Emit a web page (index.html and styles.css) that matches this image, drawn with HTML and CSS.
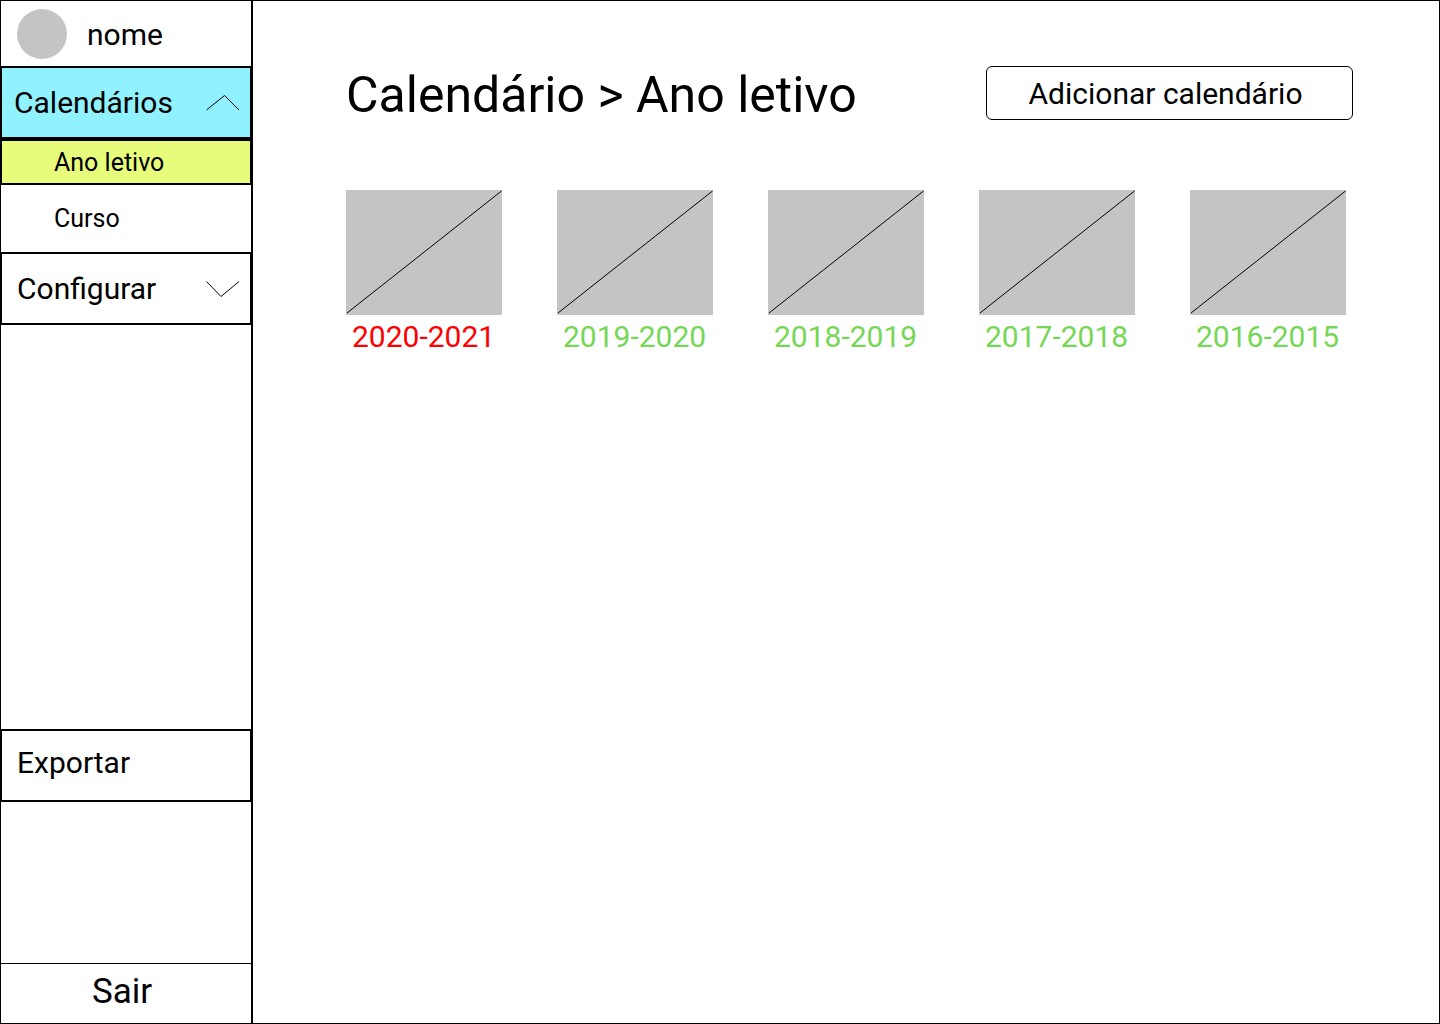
FILE: index.html
```html
<!DOCTYPE html>
<html lang="pt">
<head>
  <meta charset="utf-8">
  <meta name="viewport" content="width=device-width, initial-scale=1">
  <title>Calendário &gt; Ano letivo</title>
  <link rel="stylesheet" href="styles.css">
</head>
<body>
  <div class="shell">
    <aside class="sidebar">
      <div class="profile">
        <span class="avatar"></span>
        <span class="profile-name">nome</span>
      </div>
      <nav class="menu">
        <button class="menu-item menu-item-open" type="button" aria-expanded="true">
          Calendários
          <svg class="chevron" width="34" height="16" viewBox="0 0 34 16" aria-hidden="true"><path d="M.5 15 18.500.5 33 15"/></svg>
        </button>
        <a class="submenu-item submenu-item-current" href="#ano-letivo" aria-current="page">Ano letivo</a>
        <a class="submenu-item" href="#curso">Curso</a>
        <button class="menu-item" type="button" aria-expanded="false">
          Configurar
          <svg class="chevron" width="34" height="16" viewBox="0 0 34 16" aria-hidden="true"><path d="M.5.5 15 15.500 33 .5"/></svg>
        </button>
      </nav>
      <button class="menu-item export" type="button">Exportar</button>
      <button class="logout" type="button">Sair</button>
    </aside>
    <main class="content">
      <header class="page-header">
        <h1 class="page-title">Calendário &gt; Ano letivo</h1>
        <button class="add-button" type="button">Adicionar calendário</button>
      </header>
      <div class="calendars">
        <a class="calendar calendar-current" href="#2020-2021">
          <svg class="thumb" viewBox="0 0 156 125" aria-hidden="true"><path d="M1 123 155.500 1"/></svg>
          <span class="calendar-label">2020-2021</span>
        </a>
        <a class="calendar" href="#2019-2020">
          <svg class="thumb" viewBox="0 0 156 125" aria-hidden="true"><path d="M1 123 155.500 1"/></svg>
          <span class="calendar-label">2019-2020</span>
        </a>
        <a class="calendar" href="#2018-2019">
          <svg class="thumb" viewBox="0 0 156 125" aria-hidden="true"><path d="M1 123 155.500 1"/></svg>
          <span class="calendar-label">2018-2019</span>
        </a>
        <a class="calendar" href="#2017-2018">
          <svg class="thumb" viewBox="0 0 156 125" aria-hidden="true"><path d="M1 123 155.500 1"/></svg>
          <span class="calendar-label">2017-2018</span>
        </a>
        <a class="calendar" href="#2016-2015">
          <svg class="thumb" viewBox="0 0 156 125" aria-hidden="true"><path d="M1 123 155.500 1"/></svg>
          <span class="calendar-label">2016-2015</span>
        </a>
      </div>
    </main>
  </div>
</body>
</html>
```
FILE: styles.css
```css
* {
  box-sizing: border-box;
}

body {
  margin: 0;
  background: #fff;
  color: #000;
  font-family: Roboto, "Liberation Sans", sans-serif;
  font-size: 30px;
  line-height: 35px;
}

button {
  margin: 0;
  background: #fff;
  color: inherit;
  font: inherit;
  cursor: pointer;
}

a {
  color: inherit;
  text-decoration: none;
}

.shell {
  display: grid;
  grid-template-columns: 252px minmax(0, 1fr);
  min-height: 100vh;
  border: 1px solid #000;
}

.sidebar {
  display: flex;
  flex-direction: column;
  border-right: 2px solid #000;
}

.profile {
  display: flex;
  align-items: center;
  gap: 20px;
  height: 65px;
  padding: 1px 16px 0;
}

.avatar {
  width: 50px;
  height: 50px;
  border-radius: 50%;
  background: #c4c4c4;
}

.menu {
  display: flex;
  flex-direction: column;
}

/* Boxed entries overlap the sidebar's own side borders by one pixel. */
.menu-item {
  display: flex;
  align-items: center;
  justify-content: space-between;
  height: 73px;
  margin: 0 -1px;
  padding: 0 10px 0 15px;
  border: 2px solid #000;
  text-align: left;
}

.menu-item-open {
  padding-left: 12px;
  background: #91f2ff;
}

.chevron {
  fill: none;
  stroke: #000;
}

.submenu-item {
  display: flex;
  align-items: center;
  height: 67px;
  padding-left: 53px;
  font-size: 25px;
  line-height: 29px;
}

.submenu-item-current {
  height: 46px;
  margin: 0 -1px;
  padding-left: 52px;
  border: 2px solid #000;
  background: #e8fc7c;
}

.export {
  margin-top: auto;
  margin-bottom: 161px;
  padding-bottom: 6px;
}

.logout {
  height: 60px;
  padding: 0 8px 4px 0;
  border: 0;
  border-top: 1px solid #000;
  font-size: 35px;
  line-height: 41px;
}

.content {
  padding: 65px 86px 65px 93px;
}

.page-header {
  display: flex;
  flex-wrap: wrap;
  align-items: flex-start;
  justify-content: space-between;
  gap: 16px;
  margin-bottom: 65px;
}

.page-title {
  margin: 0;
  font-size: 50px;
  font-weight: 400;
  line-height: 59px;
}

.add-button {
  width: 367px;
  height: 54px;
  padding: 0 8px 0 0;
  border: 1px solid #000;
  border-radius: 6px;
}

.calendars {
  display: grid;
  grid-template-columns: repeat(auto-fill, 156px);
  gap: 55px;
}

.calendar {
  display: flex;
  flex-direction: column;
  gap: 4px;
  color: #76d656;
}

.calendar-current {
  color: #f00;
}

.thumb {
  display: block;
  width: 156px;
  height: 125px;
  background: #c4c4c4;
  fill: none;
  stroke: #000;
}

.calendar-label {
  padding-left: 6px;
}
```
